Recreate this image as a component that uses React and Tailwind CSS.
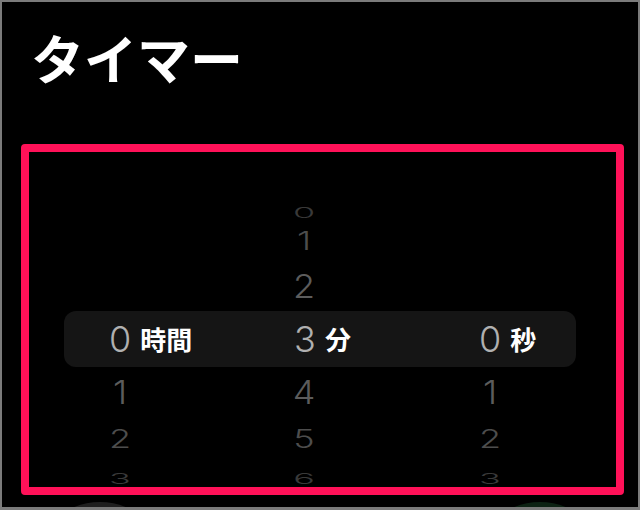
import React from "react";

// Wheel rows above and below the selected row: height, squash and colour per depth
const ABOVE = [
  { h: "h-[26px]", s: "scale-y-[0.4]", c: "text-[#393939]", vals: ["", "0", ""] },
  { h: "h-[40px]", s: "scale-y-[0.7]", c: "text-[#4d4d4d]", vals: ["", "1", ""] },
  { h: "h-[50px]", s: "scale-y-[0.92]", c: "text-[#5c5c5c]", vals: ["", "2", ""] },
];

const BELOW = [
  { h: "h-[50px]", s: "scale-y-[0.92]", c: "text-[#5c5c5c]", vals: ["1", "4", "1"] },
  { h: "h-[44px]", s: "scale-y-[0.7]", c: "text-[#4d4d4d]", vals: ["2", "5", "2"] },
  { h: "h-[18px]", s: "scale-y-[0.4]", c: "text-[#393939]", vals: ["3", "6", "3"] },
  { h: "h-[22px]", s: "scale-y-[0.2]", c: "text-[#262626]", vals: ["4", "7", "4"] },
];

const SELECTED = [
  { n: "0", label: "時間" },
  { n: "3", label: "分" },
  { n: "0", label: "秒" },
];

const digitFont = { fontFamily: "Inter, 'Noto Sans', sans-serif" };
const jpFont = { fontFamily: "'Noto Sans CJK JP', 'Noto Sans', sans-serif" };

function WheelRow({ row }) {
  return (
    <div className={`grid grid-cols-[182px_186px_186px] ${row.h} shrink-0`}>
      {row.vals.map((v, i) => (
        <div key={i} className="flex items-center justify-center">
          <span
            className={`block text-[36px] leading-none font-light ${row.c} ${row.s}`}
            style={digitFont}
          >
            {v}
          </span>
        </div>
      ))}
    </div>
  );
}

export default function App() {
  return (
    <div className="w-[640px] h-[510px] bg-black border-2 border-b-[3px] border-[#7b7b7b] overflow-hidden flex flex-col">
      <h1
        className="pl-[29px] pt-[29px] text-[53px] leading-none font-bold text-white"
        style={jpFont}
      >
        タイマー
      </h1>

      {/* Highlighted picker area */}
      <div className="ml-[19px] mt-[60px] w-[603px] h-[351px] shrink-0 border-8 border-[#ff1158] rounded-[4px] overflow-hidden flex flex-col">
        <div className="h-[43px] shrink-0" />
        {ABOVE.map((r, i) => (
          <WheelRow key={i} row={r} />
        ))}

        <div className="ml-[35px] w-[512px] h-[56px] shrink-0 rounded-[12px] bg-[#151515] grid grid-cols-[112px_258px_112px]">
          {SELECTED.map((s, i) => (
            <div
              key={i}
              className="grid grid-cols-[minmax(0,1fr)_auto_minmax(0,1fr)] items-center"
            >
              <span
                className="col-start-2 text-[36px] leading-none font-light text-[#b0b0b0]"
                style={digitFont}
              >
                {s.n}
              </span>
              <span
                className="col-start-3 justify-self-start pl-[9px] text-[26px] leading-none font-semibold text-white whitespace-nowrap"
                style={jpFont}
              >
                {s.label}
              </span>
            </div>
          ))}
        </div>

        {BELOW.map((r, i) => (
          <WheelRow key={i} row={r} />
        ))}
      </div>

      {/* Tops of the cancel / start buttons */}
      <div className="mt-[7px] px-[30px] flex justify-between shrink-0">
        <div className="w-[136px] h-[136px] rounded-full bg-[#1f1f1f]" />
        <div className="w-[136px] h-[136px] rounded-full bg-[#0c2213]" />
      </div>
    </div>
  );
}
